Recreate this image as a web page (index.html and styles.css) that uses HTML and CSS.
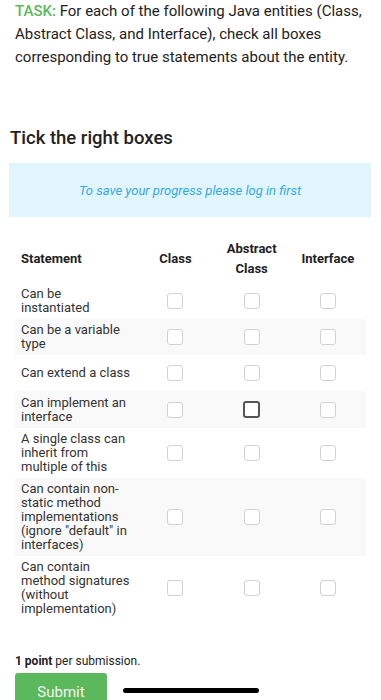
FILE: index.html
```html
<!DOCTYPE html>
<html lang="en">
<head>
<meta charset="utf-8">
<title>Tick the right boxes</title>
<link rel="stylesheet" href="styles.css">
</head>
<body>
<p class="task"><span class="task-label">TASK:</span> For each of the following Java entities (Class, Abstract Class, and Interface), check all boxes corresponding to true statements about the entity.</p>

<h2 class="title">Tick the right boxes</h2>

<div class="notice">To save your progress please log in first</div>

<table class="grid">
  <colgroup>
    <col class="c-stmt">
    <col class="c-opt">
    <col class="c-opt">
    <col class="c-opt">
  </colgroup>
  <thead>
    <tr>
      <th class="h-stmt">Statement</th>
      <th>Class</th>
      <th>Abstract Class</th>
      <th>Interface</th>
    </tr>
  </thead>
  <tbody>
    <tr>
      <td class="stmt">Can be instantiated</td>
      <td class="box"><input type="checkbox" class="cb"></td>
      <td class="box"><input type="checkbox" class="cb"></td>
      <td class="box"><input type="checkbox" class="cb"></td>
    </tr>
    <tr class="alt">
      <td class="stmt">Can be a variable type</td>
      <td class="box"><input type="checkbox" class="cb"></td>
      <td class="box"><input type="checkbox" class="cb"></td>
      <td class="box"><input type="checkbox" class="cb"></td>
    </tr>
    <tr>
      <td class="stmt">Can extend a class</td>
      <td class="box"><input type="checkbox" class="cb"></td>
      <td class="box"><input type="checkbox" class="cb"></td>
      <td class="box"><input type="checkbox" class="cb"></td>
    </tr>
    <tr class="alt">
      <td class="stmt">Can implement an interface</td>
      <td class="box"><input type="checkbox" class="cb"></td>
      <td class="box"><input type="checkbox" class="cb cb-focus"></td>
      <td class="box"><input type="checkbox" class="cb"></td>
    </tr>
    <tr>
      <td class="stmt">A single class can inherit from multiple of this</td>
      <td class="box"><input type="checkbox" class="cb"></td>
      <td class="box"><input type="checkbox" class="cb"></td>
      <td class="box"><input type="checkbox" class="cb"></td>
    </tr>
    <tr class="alt">
      <td class="stmt">Can contain non-static method implementations (ignore "default" in interfaces)</td>
      <td class="box"><input type="checkbox" class="cb"></td>
      <td class="box"><input type="checkbox" class="cb"></td>
      <td class="box"><input type="checkbox" class="cb"></td>
    </tr>
    <tr>
      <td class="stmt">Can contain method signatures (without implementation)</td>
      <td class="box"><input type="checkbox" class="cb"></td>
      <td class="box"><input type="checkbox" class="cb"></td>
      <td class="box"><input type="checkbox" class="cb"></td>
    </tr>
  </tbody>
</table>

<p class="points"><strong>1 point</strong> per submission.</p>
<button class="submit" type="button">Submit</button>

<div class="home-indicator"></div>
</body>
</html>
```

FILE: styles.css
```css
html, body {
  margin: 0;
  padding: 0;
  background: #fff;
}

body {
  font-family: Roboto, "Liberation Sans", Arial, sans-serif;
  color: #222;
}

.task {
  margin: 0;
  padding: 0 15px;
  font-size: 15px;
  line-height: 23px;
  color: #222;
}

.task-label {
  color: #5cb85c;
  font-weight: 500;
}

.title {
  margin: 57px 0 0;
  padding-left: 10px;
  font-size: 18.5px;
  line-height: 24px;
  font-weight: 500;
  color: #222;
}

.notice {
  margin: 13px 10px 0 9px;
  height: 54px;
  display: flex;
  align-items: center;
  justify-content: center;
  background: #e1f5fe;
  color: #35a8e0;
  font-size: 13px;
  font-style: italic;
}

.grid {
  margin: 18px 15px 0;
  width: 351px;
  border-collapse: collapse;
  table-layout: fixed;
  color: #333;
}

.c-stmt { width: 122px; }
.c-opt { width: 76px; }

.grid th {
  font-size: 13px;
  line-height: 20px;
  font-weight: bold;
  text-align: center;
  padding: 4px 0;
  vertical-align: middle;
  color: #222;
}

.grid th.h-stmt {
  text-align: left;
  padding-left: 6px;
}

.grid tr.alt td {
  background: #f9f9f9;
}

.stmt {
  font-size: 13px;
  line-height: 14px;
  padding: 4px 5px 4px 6px;
  vertical-align: middle;
}

.box {
  padding: 10px 0;
  line-height: 0;
  text-align: center;
  vertical-align: middle;
}

.cb {
  appearance: none;
  -webkit-appearance: none;
  display: block;
  margin: 0 auto;
  width: 16px;
  height: 16px;
  box-sizing: border-box;
  border: 1px solid #d2d2d2;
  border-radius: 3px;
  background: #fff;
}

.cb-focus {
  width: 17px;
  height: 17px;
  border: 2px solid #555;
}

.points {
  margin: 33px 15px 0;
  font-size: 12px;
  line-height: 16px;
  color: #222;
}

.points strong {
  font-weight: bold;
}

.submit {
  margin: 4px 0 0 15px;
  width: 92px;
  padding: 9px 0;
  border: none;
  border-radius: 3px;
  background: #5cb85c;
  color: #f4f4f4;
  font-family: Roboto, "Liberation Sans", Arial, sans-serif;
  font-size: 15px;
  line-height: 20px;
}

.home-indicator {
  position: fixed;
  left: 50%;
  bottom: 7px;
  width: 136px;
  height: 5px;
  margin-left: -68px;
  border-radius: 3px;
  background: #000;
}
```
